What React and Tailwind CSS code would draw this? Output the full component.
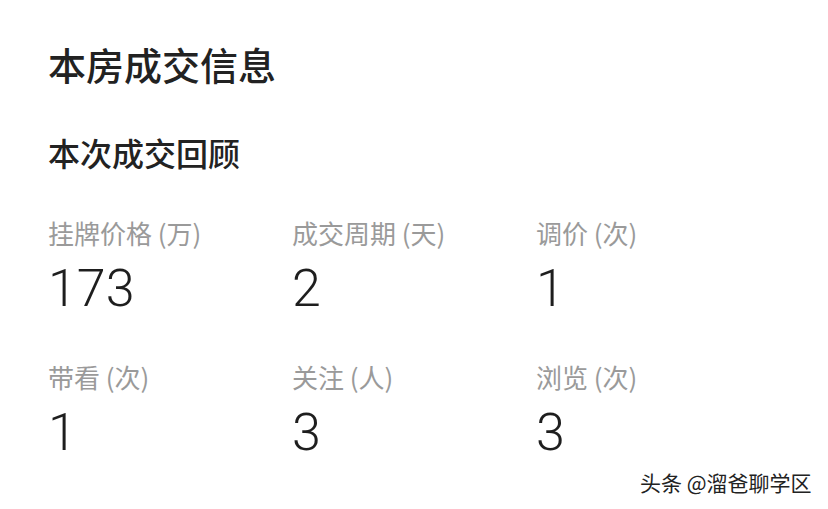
export default function App() {
  const cjk = { fontFamily: '"Noto Sans CJK SC", "Noto Sans", sans-serif' };
  const num = { fontFamily: 'Roboto, "Liberation Sans", sans-serif' };
  const rows = [
    [
      ["挂牌价格 (万)", "173"],
      ["成交周期 (天)", "2"],
      ["调价 (次)", "1"],
    ],
    [
      ["带看 (次)", "1"],
      ["关注 (人)", "3"],
      ["浏览 (次)", "3"],
    ],
  ];
  return (
    <div className="relative w-[828px] h-[509px] bg-white overflow-hidden pl-[48px] pt-[45px]" style={cjk}>
      <div className="text-[38px] leading-none font-medium text-[#222]">本房成交信息</div>
      <div className="mt-[53px] text-[32px] leading-none font-medium text-[#222]">本次成交回顾</div>
      <div className="mt-[52px] flex flex-col gap-[49px]">
        {rows.map((row, i) => (
          <div key={i} className="flex">
            {row.map(([label, value]) => (
              <div key={label} className="w-[244px] flex flex-col">
                <div className="text-[26px] leading-none text-[#9a9a9a]" style={cjk}>{label}</div>
                <div className="mt-[17px] text-[52px] leading-none font-light text-[#1e1e1e]" style={num}>{value}</div>
              </div>
            ))}
          </div>
        ))}
      </div>
      <div
        className="absolute left-[640px] top-[472px] text-[21px] leading-none text-[#222]"
        style={{ ...cjk, textShadow: "0 0 2px #fff, 0 0 2px #fff" }}
      >
        头条 @溜爸聊学区
      </div>
    </div>
  );
}
